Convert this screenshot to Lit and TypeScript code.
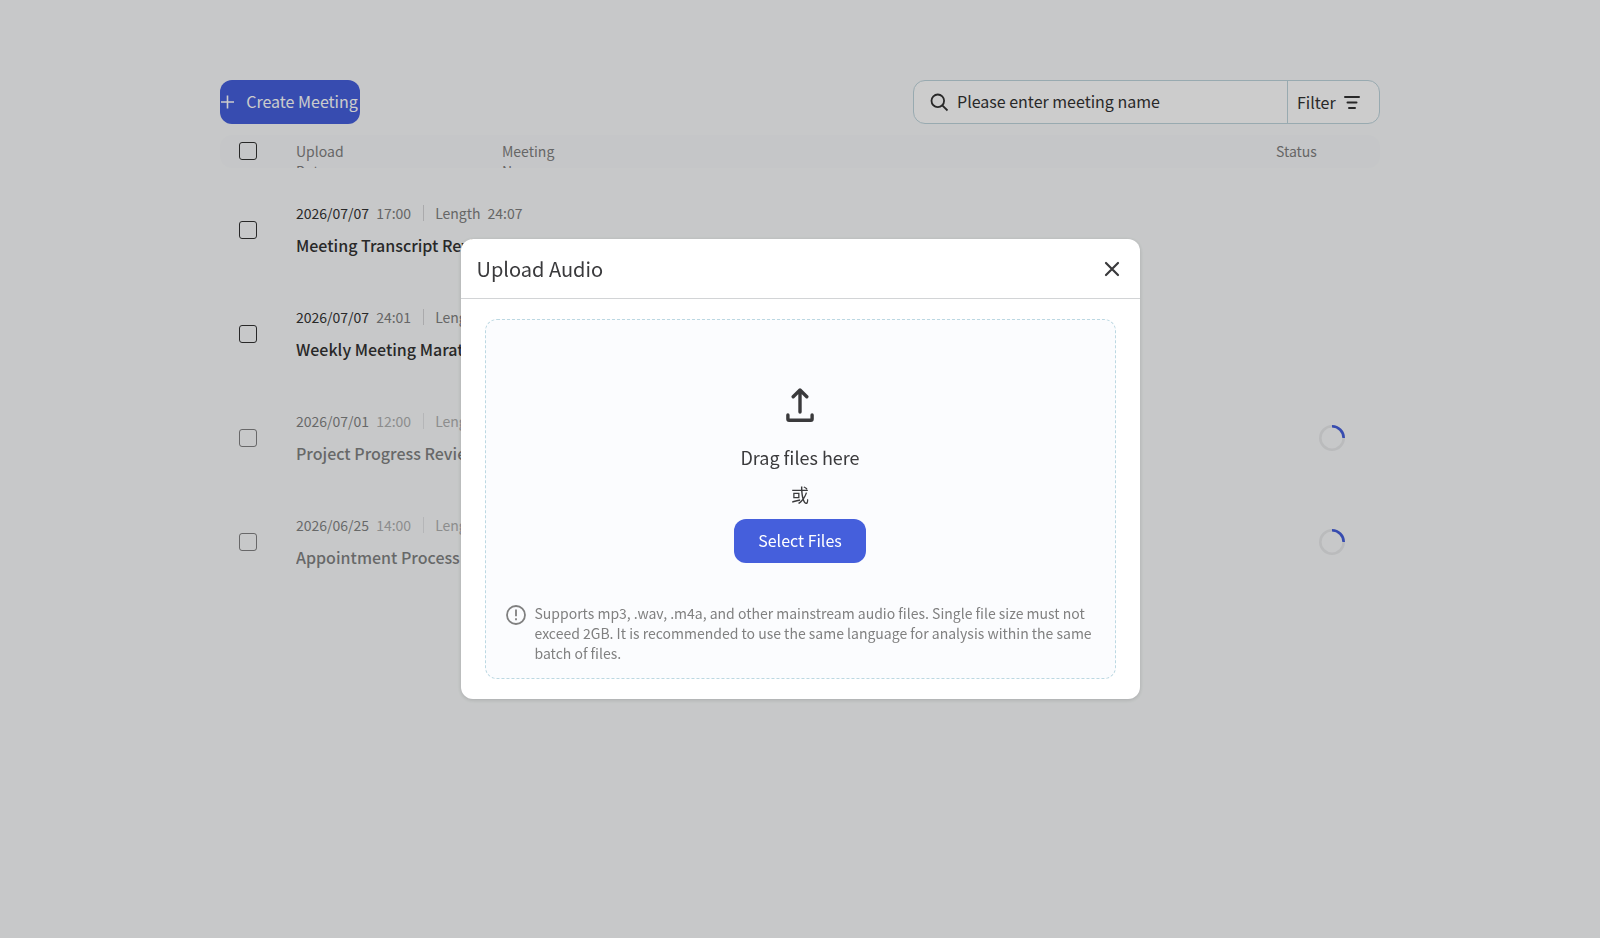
import { LitElement, html, css, nothing } from "lit";
import { customElement, property, state } from "lit/decorators.js";
import { classMap } from "lit/directives/class-map.js";

interface Meeting {
  date: string;
  time: string;
  length?: string;
  title: string;
  pending: boolean;
}

const controls = css`
  *,
  *::before,
  *::after {
    box-sizing: border-box;
  }
  button,
  input {
    font: inherit;
    color: inherit;
    margin: 0;
  }
  button {
    cursor: pointer;
  }
  svg {
    display: block;
    flex: none;
    fill: none;
    stroke: currentColor;
  }
  .primary {
    display: flex;
    align-items: center;
    justify-content: center;
    height: 44px;
    padding: 0 24px 2px;
    border: 0;
    border-radius: 12px;
    background: #455fdc;
    color: #ffffff;
    font-size: 16px;
    line-height: 24px;
    white-space: nowrap;
  }
`;

@customElement("meeting-toolbar")
class MeetingToolbar extends LitElement {
  static styles = [
    controls,
    css`
      :host {
        display: flex;
        justify-content: space-between;
        align-items: center;
      }
      .create {
        width: 140px;
        padding: 0 2px 2px 0;
        gap: 11px;
      }
      .search {
        display: flex;
        width: 467px;
        height: 44px;
        border: 1px solid #bfd5dd;
        border-radius: 12px;
        background: #ffffff;
        overflow: hidden;
        color: #333333;
        font-size: 16px;
        line-height: 24px;
      }
      .field {
        flex: 1;
        display: flex;
        align-items: center;
        gap: 8px;
        padding-left: 16px;
      }
      .field input {
        flex: 1;
        min-width: 0;
        height: 100%;
        padding: 0 0 2px;
        border: 0;
        outline: 0;
        background: none;
      }
      .field input::placeholder {
        color: #333333;
        opacity: 1;
      }
      .filter {
        display: flex;
        align-items: center;
        gap: 7px;
        width: 92px;
        padding: 0 0 0 9px;
        border: 0;
        border-left: 1px solid #bfd5dd;
        background: none;
      }
    `,
  ];

  render() {
    return html`
      <button class="primary create" type="button">
        <svg width="15" height="18" viewBox="0 -2 15 18" stroke-width="1.6" aria-hidden="true">
          <path d="M7.5 1.5v13M1 8h13" />
        </svg>
        Create Meeting
      </button>
      <div class="search">
        <label class="field">
          <svg width="19" height="19" viewBox="0 0 19 19" stroke-width="1.8" aria-hidden="true">
            <circle cx="7.8" cy="7.8" r="6.3" />
            <path d="M12.3 12.3l5.2 5.2" />
          </svg>
          <input type="text" aria-label="Meeting name" placeholder="Please enter meeting name" />
        </label>
        <button class="filter" type="button">
          Filter
          <svg width="18" height="16" viewBox="0 -1 18 16" stroke-width="2" stroke-linecap="round" aria-hidden="true">
            <path d="M2 2h14M4.5 7.5h9M6 13h6" />
          </svg>
        </button>
      </div>
    `;
  }
}

@customElement("meeting-table")
class MeetingTable extends LitElement {
  @property({ attribute: false }) meetings: Meeting[] = [];

  static styles = [
    controls,
    css`
      :host {
        display: block;
      }
      table {
        width: 100%;
        table-layout: fixed;
        border-collapse: separate;
        border-spacing: 0;
        font-size: 14px;
        line-height: 20px;
      }
      .col-check {
        width: 76px;
      }
      .col-date {
        width: 206px;
      }
      .col-status {
        width: 104px;
      }
      th,
      td {
        padding: 0;
        text-align: left;
        font-weight: 400;
      }
      th {
        background: #f7f8fa;
        color: #808080;
        vertical-align: top;
      }
      th:first-child {
        border-radius: 12px 0 0 12px;
      }
      th:last-child {
        border-radius: 0 12px 12px 0;
      }
      .clip {
        height: 33px;
        padding-top: 6px;
        overflow: hidden;
      }
      .clip.centered {
        padding-top: 7px;
      }
      .label {
        display: block;
        width: 60px;
      }
      .spacer td {
        height: 10px;
      }
      .row td {
        height: 104px;
        vertical-align: middle;
      }
      .check {
        appearance: none;
        display: block;
        width: 18px;
        height: 18px;
        margin-left: 19px;
        border: 1px solid #333333;
        border-radius: 3px;
      }
      .meta {
        display: flex;
        align-items: center;
        color: #808080;
        margin-bottom: 10px;
      }
      .date {
        color: #333333;
        margin-right: 7px;
      }
      .length {
        display: flex;
        gap: 7px;
        margin-left: 12px;
        padding-left: 11px;
        border-left: 1px solid #d5d5d8;
        line-height: 16px;
      }
      .title {
        color: #333333;
        font-size: 16px;
        line-height: 24px;
        font-weight: 500;
      }
      .pending .check,
      .pending .info {
        opacity: 0.6;
      }
      .spinner {
        width: 26px;
        height: 26px;
        margin-left: 43px;
      }
    `,
  ];

  render() {
    return html`
      <table>
        <colgroup>
          <col class="col-check" />
          <col class="col-date" />
          <col />
          <col class="col-status" />
        </colgroup>
        <thead>
          <tr>
            <th>
              <div class="clip centered"><input class="check" type="checkbox" aria-label="Select all meetings" /></div>
            </th>
            <th><div class="clip"><span class="label">Upload Date</span></div></th>
            <th><div class="clip"><span class="label">Meeting Name</span></div></th>
            <th><div class="clip"><span class="label">Status</span></div></th>
          </tr>
        </thead>
        <tbody>
          <tr class="spacer" aria-hidden="true"><td colspan="4"></td></tr>
          ${this.meetings.map(
            (m) => html`
              <tr class=${classMap({ row: true, pending: m.pending })}>
                <td><input class="check" type="checkbox" aria-label=${`Select ${m.title}`} /></td>
                <td colspan="2">
                  <div class="info">
                    <div class="meta">
                      <span class="date">${m.date}</span>
                      <span>${m.time}</span>
                      <span class="length">
                        <span>Length</span>
                        ${m.length ? html`<span>${m.length}</span>` : nothing}
                      </span>
                    </div>
                    <div class="title">${m.title}</div>
                  </div>
                </td>
                <td>
                  ${m.pending
                    ? html`<svg class="spinner" viewBox="0 0 26 26" stroke-width="2.6" role="img" aria-label="Processing">
                        <circle cx="13" cy="13" r="11.7" stroke="#e9eaec" />
                        <path d="M13 1.3A11.7 11.7 0 0 1 24.7 13" stroke="#455fdc" />
                      </svg>`
                    : nothing}
                </td>
              </tr>
            `
          )}
        </tbody>
      </table>
    `;
  }
}

@customElement("upload-dialog")
class UploadDialog extends LitElement {
  static styles = [
    controls,
    css`
      :host {
        position: fixed;
        inset: 0;
        display: flex;
        align-items: center;
        justify-content: center;
        padding: 24px;
        background: rgba(0, 0, 0, 0.2);
      }
      .dialog {
        width: 100%;
        max-width: 679px;
        border-radius: 12px;
        background: #ffffff;
        box-shadow: 0 1px 4px rgba(0, 0, 0, 0.16);
        color: #3a3a3c;
      }
      header {
        display: flex;
        align-items: center;
        justify-content: space-between;
        height: 60px;
        padding: 0 16px;
        border-bottom: 1px solid #d2d4d6;
      }
      h2 {
        margin: 0;
        font-size: 20px;
        line-height: 30px;
        font-weight: 400;
      }
      .close {
        display: flex;
        padding: 4px;
        border: 0;
        background: none;
      }
      .body {
        padding: 20px 24px;
      }
      .drop {
        display: flex;
        flex-direction: column;
        align-items: center;
        padding: 68px 20px 15px;
        border: 1px dashed #bcd8e2;
        border-radius: 12px;
        background: #fbfcfe;
      }
      .lead {
        margin: 20px 0 0;
        font-size: 18px;
        line-height: 30px;
      }
      .or {
        margin: 10px 0 13px;
        font-size: 18px;
        line-height: 24px;
      }
      .note {
        display: flex;
        align-self: stretch;
        align-items: flex-start;
        gap: 9px;
        margin: 40px 0 0;
        color: #808080;
        font-size: 14px;
        line-height: 20px;
      }
    `,
  ];

  private close() {
    this.dispatchEvent(new CustomEvent("dismiss"));
  }

  render() {
    return html`
      <section class="dialog" role="dialog" aria-modal="true" aria-labelledby="title">
        <header>
          <h2 id="title">Upload Audio</h2>
          <button class="close" type="button" aria-label="Close" @click=${this.close}>
            <svg width="16" height="16" viewBox="0 0 16 16" stroke-width="2.2" stroke-linecap="round">
              <path d="M2 2l12 12M14 2L2 14" />
            </svg>
          </button>
        </header>
        <div class="body">
          <div class="drop">
            <svg width="28" height="34" viewBox="0 0 28 34" stroke-width="3.4" stroke-linecap="round" stroke-linejoin="round" aria-hidden="true">
              <path d="M14 24V2.4M7.2 8.8L14 2L20.8 8.8" />
              <path d="M1.9 27v4a1.2 1.2 0 0 0 1.2 1.2h21.8a1.2 1.2 0 0 0 1.2-1.2v-4" />
            </svg>
            <p class="lead">Drag files here</p>
            <p class="or">或</p>
            <button class="primary" type="button">Select Files</button>
            <div class="note">
              <svg width="20" height="24" viewBox="0 -2 20 24" stroke-width="1.8" aria-hidden="true">
                <circle cx="10" cy="10" r="9" />
                <path d="M10 4.5v6.8M10 13.2v2" />
              </svg>
              <span>
                Supports mp3, .wav, .m4a, and other mainstream audio files. Single file size must not exceed 2GB. It is
                recommended to use the same language for analysis within the same batch of files.
              </span>
            </div>
          </div>
        </div>
      </section>
    `;
  }
}

@customElement("app-root")
class AppRoot extends LitElement {
  @state() private uploading = true;

  private meetings: Meeting[] = [
    { date: "2026/07/07", time: "17:00", length: "24:07", title: "Meeting Transcript Review", pending: false },
    { date: "2026/07/07", time: "24:01", title: "Weekly Meeting Marathon", pending: false },
    { date: "2026/07/01", time: "12:00", title: "Project Progress Review", pending: true },
    { date: "2026/06/25", time: "14:00", title: "Appointment Process", pending: true },
  ];

  static styles = css`
    :host {
      display: block;
      box-sizing: border-box;
      min-height: 100vh;
      padding: 80px 24px;
      background: #f9fbfc;
      font-family: "Noto Sans CJK TC", "Noto Sans CJK SC", sans-serif;
    }
    main {
      display: flex;
      flex-direction: column;
      gap: 11px;
      max-width: 1160px;
      margin: 0 auto;
    }
  `;

  render() {
    return html`
      <main>
        <meeting-toolbar></meeting-toolbar>
        <meeting-table .meetings=${this.meetings}></meeting-table>
      </main>
      ${this.uploading
        ? html`<upload-dialog @dismiss=${() => (this.uploading = false)}></upload-dialog>`
        : nothing}
    `;
  }
}
